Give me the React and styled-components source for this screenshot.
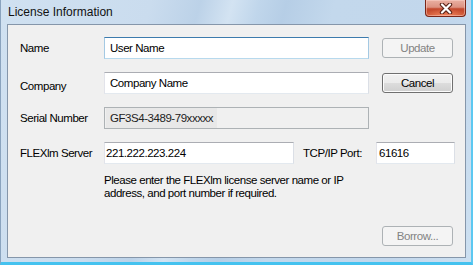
import React from "react";
import styled, { createGlobalStyle } from "styled-components";

const Global = createGlobalStyle`
  html, body { margin: 0; padding: 0; }
  body {
    width: 473px;
    height: 265px;
    overflow: hidden;
    font-family: "Liberation Sans", Arial, sans-serif;
    font-size: 11.5px;
    letter-spacing: -0.45px;
    color: #000;
  }
`;

const Window = styled.div`
  box-sizing: border-box;
  width: 473px;
  height: 265px;
  display: flex;
  flex-direction: column;
  border-left: 1px solid #8aa3be;
  border-right: 2px solid #5cc8f1;
  border-bottom: 3px solid #45c2ef;
  padding: 0 5px 4px 6px;
  background:
    linear-gradient(105deg,
      #d0e1f1 0%, #cadcee 28%, #bcd2e8 37%, #d3e3f2 43%,
      #c0d6eb 48%, #b6cee6 53%, #c3d8ec 62%, #c2d7ec 85%, #cde0f1 100%);
`;

const TitleBar = styled.div`
  display: flex;
  align-items: flex-start;
  height: 24px;
  flex: none;
  padding-left: 1px;
`;

const Title = styled.div`
  align-self: center;
  font-size: 12px;
  letter-spacing: 0;
  color: #111;
  line-height: 24px;
`;

const CloseButton = styled.div`
  margin-left: auto;
  box-sizing: border-box;
  width: 41px;
  height: 17px;
  display: flex;
  align-items: center;
  justify-content: center;
  border: 1px solid #7a2618;
  border-top: none;
  border-radius: 0 0 4px 4px;
  background:
    radial-gradient(ellipse 60% 45% at 50% 100%, rgba(255, 150, 110, 0.8), rgba(255,150,110,0) 100%),
    linear-gradient(#eab0a2 0%, #dc9281 45%, #c44a2f 55%, #c9512f 100%);
  box-shadow: inset 0 0 0 1px rgba(255, 220, 210, 0.45);
`;

const Panel = styled.div`
  flex: 1;
  box-sizing: border-box;
  border: 1px solid #8596aa;
  background: #f0f0f0;
  display: grid;
  grid-template-columns: 71px 265px 71px;
  grid-auto-rows: auto;
  column-gap: 13px;
  row-gap: 13px;
  align-content: start;
  padding: 12px 12px 0 12px;
`;

const Label = styled.div`
  align-self: center;
  white-space: nowrap;
  position: relative;
  top: ${(p) => p.$shift || 0}px;
`;

const TextBox = styled.input`
  box-sizing: border-box;
  height: 22px;
  width: ${(p) => (p.$width ? `${p.$width}px` : "100%")};
  margin: 0;
  padding: 0 0 0 ${(p) => p.$pad ?? 5}px;
  font: inherit;
  letter-spacing: inherit;
  color: #000;
  background: #fff;
  border: 1px solid;
  border-color: ${(p) =>
    p.$focused
      ? "#3d7bad #a4c9e3 #b7d9ed #a4c9e3"
      : "#abadb3 #dbdfe6 #e3e9ef #e2e3ea"};
  border-radius: 0;
  outline: none;
`;

const ReadOnlyBox = styled.div`
  box-sizing: border-box;
  height: 22px;
  display: flex;
  align-items: stretch;
  padding-left: 1px;
  background: #f0f0f0;
  border: 1px solid #adb2b5;
`;

const ReadOnlyText = styled.span`
  display: flex;
  align-items: center;
  padding: 0 4px 0 4px;
  background: #e8e8e8;
  color: #222;
`;

const Button = styled.div`
  align-self: center;
  box-sizing: border-box;
  height: 20px;
  display: flex;
  align-items: center;
  justify-content: center;
  border-radius: 3px;
  border: 1px solid ${(p) => (p.$disabled ? "#adb2b5" : "#707070")};
  color: ${(p) => (p.$disabled ? "#838383" : "#000")};
  background: ${(p) =>
    p.$disabled
      ? "#f4f4f4"
      : "linear-gradient(#f2f2f2 0%, #ebebeb 50%, #dddddd 50%, #cfcfcf 100%)"};
  box-shadow: ${(p) => (p.$disabled ? "none" : "inset 0 0 0 1px #fcfcfc")};
  margin-top: ${(p) => p.$top || 0}px;
`;

const ServerRow = styled.div`
  grid-column: 2 / 4;
  display: flex;
  align-items: center;
  margin-right: -2px;
`;

const PortLabel = styled.div`
  margin-left: 9px;
  white-space: nowrap;
`;

const PortBox = styled.div`
  margin-left: auto;
`;

const Help = styled.div`
  grid-column: 2 / 4;
  line-height: 13px;
  margin-top: -3px;
`;

const Spacer = styled.div`
  grid-column: 1 / 3;
`;

function CloseGlyph() {
  return (
    <svg width="14" height="11" viewBox="0 0 14 11">
      <path d="M3 1.5 L11 9.5 M11 1.5 L3 9.5" stroke="#5b2418" strokeWidth="4.4" strokeLinecap="round" fill="none" />
      <path d="M3 1.5 L11 9.5 M11 1.5 L3 9.5" stroke="#ffffff" strokeWidth="2.2" strokeLinecap="round" fill="none" />
    </svg>
  );
}

export default function App() {
  return (
    <>
      <Global />
      <Window>
        <TitleBar>
          <Title>License Information</Title>
          <CloseButton>
            <CloseGlyph />
          </CloseButton>
        </TitleBar>
        <Panel>
          <Label>Name</Label>
          <TextBox $focused defaultValue="User Name" />
          <Button $disabled>Update</Button>

          <Label $shift={3}>Company</Label>
          <TextBox defaultValue="Company Name" />
          <Button>Cancel</Button>

          <Label>Serial Number</Label>
          <ReadOnlyBox>
            <ReadOnlyText>GF3S4-3489-79xxxxx</ReadOnlyText>
          </ReadOnlyBox>
          <div />

          <Label>FLEXlm Server</Label>
          <ServerRow>
            <TextBox $width={190} $pad={1} defaultValue="221.222.223.224" />
            <PortLabel>TCP/IP Port:</PortLabel>
            <PortBox>
              <TextBox $width={79} $pad={2} defaultValue="61616" />
            </PortBox>
          </ServerRow>

          <div />
          <Help>
            Please enter the FLEXlm license server name or IP
            <br />
            address, and port number if required.
          </Help>

          <Spacer />
          <Button $disabled $top={13}>Borrow...</Button>
        </Panel>
      </Window>
    </>
  );
}
